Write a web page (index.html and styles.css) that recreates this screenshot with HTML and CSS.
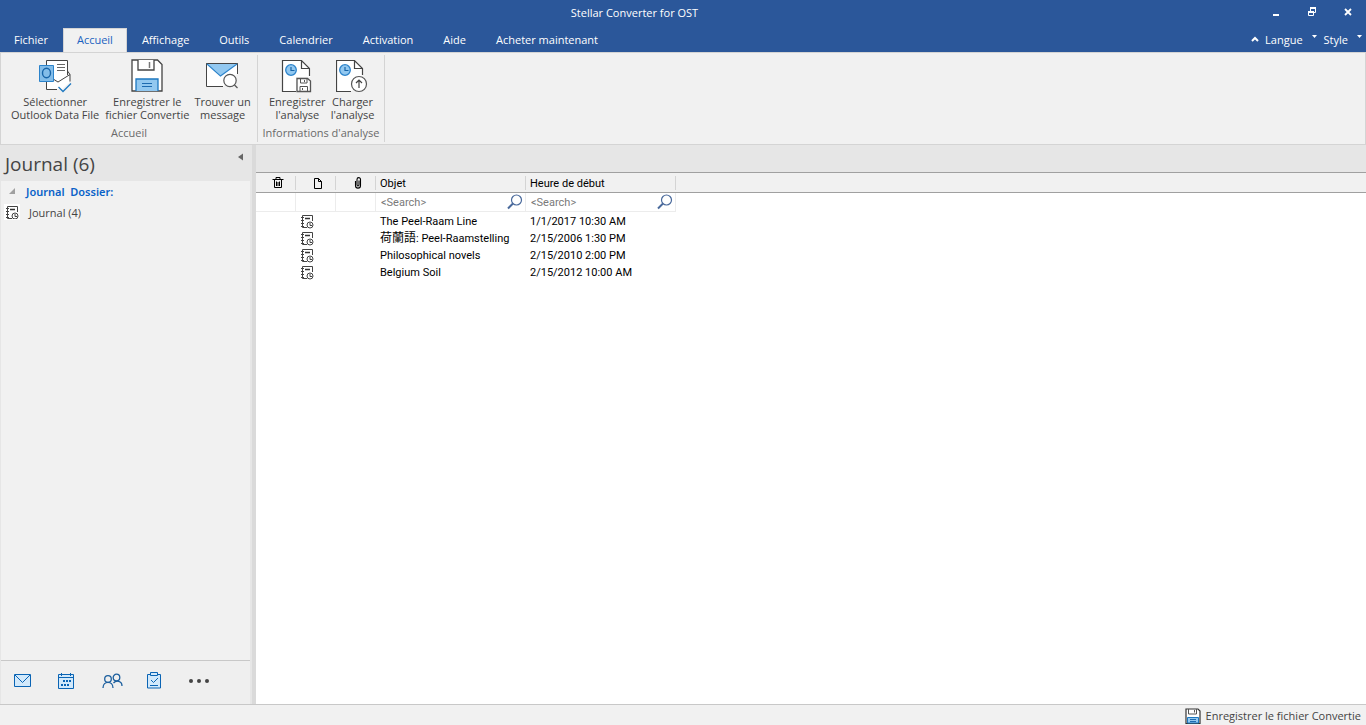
FILE: index.html
```html
<!DOCTYPE html>
<html lang="fr">
<head>
<meta charset="utf-8">
<title>Stellar Converter for OST</title>
<link rel="stylesheet" href="styles.css">
</head>
<body>
<svg class="defs" aria-hidden="true">
  <symbol id="journal" viewBox="0 0 14 15">
    <path d="M12.500 7V1.500H2.500V13.500H7" fill="none" stroke="#444"/>
    <path d="M1 3.500H4M1 6.500H4M1 9.500H4M1 12.500H4" stroke="#444"/>
    <path d="M5 4.500H10" stroke="#333" stroke-width="1.500"/>
    <circle cx="10" cy="11" r="3" fill="#fff" stroke="#444"/>
    <path d="M10 9V11.500H12" fill="none" stroke="#444"/>
  </symbol>
  <symbol id="lens" viewBox="0 0 16 16">
    <circle cx="9.500" cy="6" r="5" fill="none" stroke="#4a6a9c" stroke-width="1.200"/>
    <path d="M6 9.500L1 14.500" stroke="#4a6a9c" stroke-width="2"/>
  </symbol>
  <symbol id="floppy" viewBox="0 0 32 33">
    <path d="M1 1H26.500L31 5.500V32H1Z" fill="#fff" stroke="#444" stroke-width="1.300"/>
    <path d="M7 1V11H23V1" fill="#fff" stroke="#444" stroke-width="1.300"/>
    <path d="M18.500 3V9" stroke="#777" stroke-width="1.500"/>
    <path d="M5 32V20H27V32" fill="#92c8f0" stroke="#1e78c0" stroke-width="1.300"/>
    <path d="M11 24.500H21M11 27.500H21" stroke="#1e6bb0"/>
  </symbol>
</svg>
<div class="app">
  <header class="top">
    <div class="titlebar">
      <h1 class="title">Stellar Converter for OST</h1>
      <button class="win" aria-label="Réduire"><svg width="10" height="10"><path d="M2 8H8" stroke="#fff" stroke-width="2"/></svg></button>
      <button class="win" aria-label="Restaurer"><svg width="10" height="10"><path d="M3.500 4V1.500H8.500V5.500H6" fill="none" stroke="#fff"/><path d="M3 1H9" stroke="#fff" stroke-width="2"/><path d="M1.500 4.500H6.500V8.500H1.500Z" fill="none" stroke="#fff"/><path d="M1 5H7" stroke="#fff" stroke-width="2"/></svg></button>
      <button class="win" aria-label="Fermer"><svg width="10" height="10"><path d="M2 2L8 8M8 2L2 8" stroke="#fff" stroke-width="1.800"/></svg></button>
    </div>
    <nav class="tabs">
      <button class="tab">Fichier</button>
      <button class="tab active">Accueil</button>
      <button class="tab">Affichage</button>
      <button class="tab">Outils</button>
      <button class="tab">Calendrier</button>
      <button class="tab">Activation</button>
      <button class="tab">Aide</button>
      <button class="tab">Acheter maintenant</button>
      <div class="options">
        <button class="option" aria-label="Réduire le ruban"><svg width="8" height="6"><path d="M1 5L4 2L7 5" fill="none" stroke="#fff" stroke-width="2"/></svg></button>
        <button class="option lang">Langue<svg width="6" height="10"><path d="M0 1H5L2.500 4Z" fill="#fff"/></svg></button>
        <button class="option">Style<svg width="6" height="10"><path d="M0 1H5L2.500 4Z" fill="#fff"/></svg></button>
      </div>
    </nav>
  </header>

  <section class="ribbon">
    <div class="group home">
      <div class="tools">
        <button class="tool wide">
          <svg width="34" height="36" viewBox="0 0 34 36"><path d="M8.500 8V2.500H29.500V17M8.500 23V31.500H19" fill="none" stroke="#444"/><path d="M9 3H29V18L20 24L16 22H9Z" fill="#fff"/><path d="M9 23H16L20 25L31 17V25L24 31H9Z" fill="#fff"/><path d="M16 21.500L20 24L32 16.500V23.500M29.500 17V13L32 16.500" fill="none" stroke="#444"/><path d="M19 6.500H27M19 9.500H27M19 12.500H27" stroke="#666"/><path d="M1.500 7.500H15.500V23.500H1.500Z" fill="#83bde9" stroke="#2b83cb"/><ellipse cx="8.500" cy="15" rx="4" ry="4.700" fill="none" stroke="#1764a8" stroke-width="1.400"/><path d="M20.500 29L25 33.500L33 25.500" fill="none" stroke="#1e78c0" stroke-width="1.300"/></svg>
          <span>Sélectionner<br>Outlook Data File</span>
        </button>
        <button class="tool">
          <svg width="34" height="36" viewBox="-1 -1 34 36"><use href="#floppy" width="32" height="33"/></svg>
          <span>Enregistrer le<br>fichier Convertie</span>
        </button>
        <button class="tool">
          <svg width="34" height="36" viewBox="1 0 34 36"><path d="M18 28.500H1.500V5.500H32.500V16" fill="#fff" stroke="#444"/><path d="M2 5.500H32L16 17.500Z" fill="#92c8f0"/><path d="M1.500 5.500H32.500" stroke="#444"/><path d="M2 6L15.500 18L32 6" fill="none" stroke="#2b83cb" stroke-width="1.200"/><circle cx="25" cy="22.500" r="6.200" fill="#fff" stroke="#555" stroke-width="1.200"/><path d="M29.500 27L32.500 30" stroke="#555" stroke-width="1.300"/></svg>
          <span>Trouver un<br>message</span>
        </button>
      </div>
      <div class="caption">Accueil</div>
    </div>
    <div class="group scan">
      <div class="tools">
        <button class="tool">
          <svg width="34" height="36" viewBox="1 0 34 36"><path d="M17 33.500H3.500V2.500H23L31.500 10.500V19H17Z" fill="#fff"/><path d="M17 33.500H3.500V2.500H22.500L30.500 10.500V18M22.500 2.500V10.500H30.500" fill="none" stroke="#444" stroke-width="1.200"/><circle cx="12" cy="12" r="5.300" fill="#92c8f0" stroke="#2b83cb" stroke-width="1.300"/><path d="M12 9V12.500H15.500" fill="none" stroke="#1764a8" stroke-width="1.200"/><path d="M18 20.500H28.500L31.500 23V33.500H18Z" fill="#fff" stroke="#555" stroke-width="1.300"/><path d="M21.500 21V25H28V21M21 33V28.500H28.500V33M25.500 22V24M23.500 30V32" fill="none" stroke="#555"/></svg>
          <span>Enregistrer<br>l'analyse</span>
        </button>
        <button class="tool">
          <svg width="34" height="36" viewBox="2 0 34 36"><path d="M3 33.500V2.500H21L28.500 10.500V18L18 33Z" fill="#fff"/><path d="M17 33.500H2.500V2.500H20.500L28.500 10.500V17M20.500 2.500V10.500H28.500" fill="none" stroke="#444" stroke-width="1.200"/><circle cx="11" cy="12" r="5.300" fill="#92c8f0" stroke="#2b83cb" stroke-width="1.300"/><path d="M11 9V12.500H14.500" fill="none" stroke="#1764a8" stroke-width="1.200"/><circle cx="25" cy="26" r="7.500" fill="#fff" stroke="#555" stroke-width="1.200"/><path d="M25 30V22.500M22 25L25 22L28 25" fill="none" stroke="#444" stroke-width="1.200"/></svg>
          <span>Charger<br>l'analyse</span>
        </button>
      </div>
      <div class="caption">Informations d'analyse</div>
    </div>
  </section>

  <div class="body">
    <aside class="side">
      <div class="side-head">
        <h2>Journal (6)</h2>
        <button class="collapse" aria-label="Replier"><svg width="5" height="8"><path d="M5 .5V7.500L0 4Z" fill="#666"/></svg></button>
      </div>
      <div class="tree">
        <div class="node root"><svg width="7" height="6"><path d="M6 0V6H0Z" fill="#a0a0a0"/></svg><span>Journal&nbsp; Dossier:</span></div>
        <div class="node"><svg class="journal" width="16" height="16"><use href="#journal" width="14" height="15"/></svg><span>Journal (4)</span></div>
      </div>
      <nav class="switcher">
        <button aria-label="Courrier"><svg width="18" height="16"><path d="M.5 1.500H16.500V13.500H.5Z" fill="#d2e9fb" stroke="#0a64b4"/><path d="M1 2L8.500 9.500L16 2" fill="none" stroke="#0a64b4"/></svg></button>
        <button aria-label="Calendrier"><svg width="18" height="16"><path d="M.5 1.500H15.500V15.500H.5Z" fill="#d2e9fb" stroke="#0a64b4"/><path d="M1 4.500H15M3.500 0V3M12.500 0V3" stroke="#0a64b4"/><path d="M5 8H13M3 12H11" stroke="#0a64b4" stroke-width="2" stroke-dasharray="2 1"/></svg></button>
        <button aria-label="Contacts"><svg width="22" height="16"><g fill="none" stroke="#1c5f9e" stroke-width="1.300"><circle cx="6" cy="6" r="3.300"/><circle cx="14.500" cy="4.500" r="3.300"/><path d="M1 15C1 7.500 11 7.500 11 15M11.500 10C14 7 20 7.500 20 13"/></g></svg></button>
        <button aria-label="Tâches"><svg width="16" height="17"><path d="M1.500 2.500H14.500V16H1.500Z" fill="#d2e9fb" stroke="#0a64b4"/><path d="M4.500 .5H11.500V3.500H4.500Z" fill="#d2e9fb" stroke="#0a64b4"/><path d="M5 8L7.500 10.500L12 6M4 13.500H12" fill="none" stroke="#0a64b4"/></svg></button>
        <button aria-label="Plus"><svg width="22" height="6"><g fill="#444"><circle cx="3" cy="3" r="2"/><circle cx="11" cy="3" r="2"/><circle cx="19" cy="3" r="2"/></g></svg></button>
      </nav>
    </aside>
    <main class="main">
      <div class="strip"></div>
      <table class="grid">
        <colgroup><col class="ic"><col class="ic"><col class="ic"><col class="tx"><col class="tx"><col></colgroup>
        <thead>
          <tr class="heads">
            <th><svg width="12" height="12"><path d="M.5 2.500H11.500M4 2V.5H8V2M2.500 3V10.500H9.500V3M4.500 4.500V9M7.500 4.500V9M6 5V9" fill="none" stroke="#000"/></svg></th>
            <th><svg width="10" height="12"><path d="M1.500 1.500H5.500L8.500 4.500V11.500H1.500ZM5.500 1.500V4.500H8.500" fill="none" stroke="#000"/></svg></th>
            <th><svg width="8" height="12"><path d="M1.500 4V8.500C1.500 12 6.500 12 6.500 8.500V2.500C6.500 0 3 0 3 2.500V7.500C3 9.500 5 9.500 5 7.500V3.500" fill="none" stroke="#000" stroke-width="1.100"/></svg></th>
            <th>Objet</th><th>Heure de début</th><th class="rest"></th>
          </tr>
          <tr class="search">
            <td></td><td></td><td></td>
            <td><label class="find-box"><input placeholder="&lt;Search&gt;" size="8" aria-label="Rechercher un objet"><svg width="16" height="16"><use href="#lens" width="16" height="16"/></svg></label></td>
            <td><label class="find-box"><input placeholder="&lt;Search&gt;" size="8" aria-label="Rechercher une heure de début"><svg width="16" height="16"><use href="#lens" width="16" height="16"/></svg></label></td>
            <td class="rest"></td>
          </tr>
        </thead>
        <tbody>
          <tr><td></td><td><svg width="14" height="15"><use href="#journal" width="14" height="15"/></svg></td><td></td><td>The Peel-Raam Line</td><td>1/1/2017 10:30 AM</td><td></td></tr>
          <tr><td></td><td><svg width="14" height="15"><use href="#journal" width="14" height="15"/></svg></td><td></td><td><span class="cjk" lang="ja">荷蘭語</span>: Peel-Raamstelling</td><td>2/15/2006 1:30 PM</td><td></td></tr>
          <tr><td></td><td><svg width="14" height="15"><use href="#journal" width="14" height="15"/></svg></td><td></td><td>Philosophical novels</td><td>2/15/2010 2:00 PM</td><td></td></tr>
          <tr><td></td><td><svg width="14" height="15"><use href="#journal" width="14" height="15"/></svg></td><td></td><td>Belgium Soil</td><td>2/15/2012 10:00 AM</td><td></td></tr>
        </tbody>
      </table>
    </main>
  </div>
  <footer class="status"><button><svg width="16" height="16"><path d="M1 1H13L15 3V15.500H1Z" fill="#fff" stroke="#333" stroke-width="1.200"/><path d="M3.500 1V6H11.500V1M9.500 2V4.500" fill="none" stroke="#555"/><path d="M2.500 15V9.500H13.500V15Z" fill="#92c8f0" stroke="#1e78c0"/><path d="M5 11.500H11M5 13.500H11" stroke="#1e6bb0"/></svg>Enregistrer le fichier Convertie</button></footer>
</div>
</body>
</html>
```
FILE: styles.css
```css
* { box-sizing: border-box; }
body {
  margin: 0;
  font: 11px/13px "Open Sans", "Noto Sans", sans-serif;
  color: #444;
}
button { margin: 0; padding: 0; border: 0; background: none; font: inherit; color: inherit; }
svg { display: block; flex: none; }
.defs { position: absolute; width: 0; height: 0; }
.app { display: flex; flex-direction: column; height: 100vh; background: #f1f1f1; }

.top { background: #2b579a; color: #fff; }
.titlebar { display: flex; align-items: center; height: 28px; padding: 0 0 4px 11px; }
.title { flex: 1; margin: 0; font-size: 11px; font-weight: 400; text-align: center; }
.win { display: grid; place-items: center; width: 36px; height: 24px; }
.tabs { display: flex; height: 24px; }
.tab { padding: 0 15px 2px; }
.tab:first-child { padding-left: 14px; }
.tab.active { background: #f1f1f1; border: 1px solid #d4d4d4; border-bottom: 0; color: #1a62c0; padding: 0 13px 2px; }
.options { display: flex; align-items: center; gap: 8px; margin-left: auto; padding: 0 3px 2px 0; }
.option { display: flex; gap: 9px; align-items: center; }
.option + .option { margin-left: -2px; }

.ribbon { display: flex; height: 93px; border: 1px solid #d4d4d4; }
.group { display: flex; flex-direction: column; margin: 2px 0; border-right: 1px solid #d4d4d4; }
.tools { display: flex; padding: 3px 0 0 9px; gap: 5px; }
.scan .tools { padding-left: 11px; }
.home { width: 257px; }
.scan { width: 127px; }
.tool { display: flex; flex-direction: column; align-items: center; gap: 1px; white-space: nowrap; line-height: 13px; }
.tool.wide { padding: 0 1px; }
.caption { text-align: center; color: #6a6a6a; margin-top: 5px; }

.body { display: flex; flex: 1; min-height: 0; }
.side { display: flex; flex-direction: column; width: 256px; border-left: 1px solid #e6e6e6; border-right: 4px solid #dadada; background: #e6e6e6; }
.side-head { display: flex; justify-content: space-between; height: 36px; padding: 0 9px 0 4px; }
.side-head h2 { margin: 7px 0 0; font-size: 19px; line-height: 24px; font-weight: 400; }
.collapse { align-self: flex-start; padding-top: 8px; }
.tree { flex: 1; margin-right: 2px; background: #f1f1f1; }
.node { display: flex; align-items: center; height: 22px; padding-left: 3px; gap: 9px; }
.node.root { height: 20px; padding-left: 8px; gap: 10px; color: #0a62c8; font-family: "Noto Sans", sans-serif; font-weight: 600; }
.journal { background: #fff; padding: 1px; }
.switcher { display: flex; align-items: center; gap: 26px; height: 44px; margin-right: 2px; padding: 0 0 4px 13px; border-top: 1px solid #c8c8c8; background: #efefef; }
.switcher button:nth-child(4) { margin-left: -4px; }

.main { flex: 1; min-width: 0; background: #fff; }
.strip { height: 27px; background: #e6e6e6; }
.grid { width: 100%; table-layout: fixed; border-collapse: separate; border-spacing: 0; font: 11px/15px Roboto, "Noto Sans CJK JP", sans-serif; color: #000; }
.ic { width: 40px; }
.tx { width: 150px; }
.grid th, .grid td { height: 17px; padding: 0 0 0 4px; font-weight: 400; text-align: left; white-space: nowrap; overflow: hidden; }
.grid tbody td { padding-top: 2px; }
.grid thead th { height: 21px; background: #f1f1f1; border: 1px solid #a0a0a0; border-width: 1px 0; }
.heads th:nth-child(n+4) { padding-top: 2px; }
.heads th:not(.rest) { background: linear-gradient(#d4d4d4, #d4d4d4) right center / 1px 14px no-repeat #f1f1f1; }
.heads th:nth-child(-n+3) svg { margin: 0 auto; }
.search td { height: 19px; border-right: 1px solid #ececec; border-bottom: 1px solid #ececec; }
.search td.rest { border: 0; }
.find-box { display: flex; justify-content: space-between; align-items: center; padding: 0 2px 0 1px; }
.find-box input { width: 100px; height: 15px; padding: 0; border: 0; outline: 0; background: none; font: inherit; }
.find-box input::placeholder { color: #7a7a7a; opacity: 1; }
.cjk { font-size: 12px; line-height: 1; }

.status { display: flex; justify-content: flex-end; align-items: center; height: 21px; padding: 1px 5px 0 0; border-top: 1px solid #c8c8c8; }
.status button { display: flex; align-items: center; gap: 5px; }
```
